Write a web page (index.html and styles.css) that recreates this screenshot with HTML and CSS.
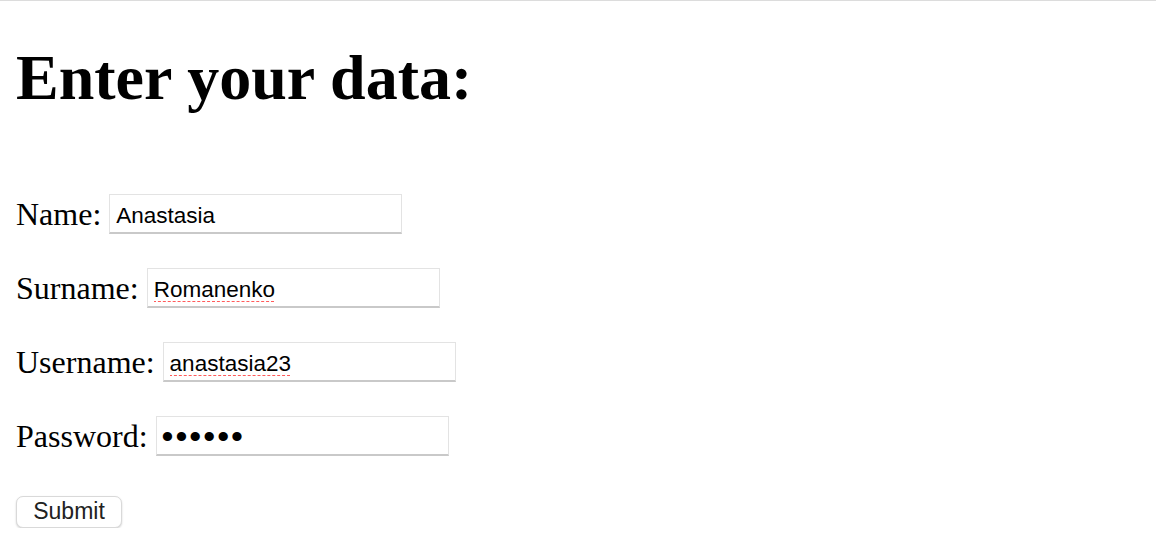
FILE: index.html
```html
<!DOCTYPE html>
<html lang="en">
<head>
<meta charset="utf-8">
<title>Enter your data</title>
<link rel="stylesheet" href="styles.css">
</head>
<body>
<div class="page">
  <h1 class="title">Enter your data:</h1>
  <form class="form">
    <div class="row">
      <label class="label" for="name">Name:</label>
      <input class="field" id="name" type="text" value="Anastasia">
    </div>
    <div class="row">
      <label class="label" for="surname">Surname:</label>
      <input class="field misspelled" id="surname" type="text" value="Romanenko">
    </div>
    <div class="row">
      <label class="label" for="username">Username:</label>
      <input class="field misspelled" id="username" type="text" value="anastasia23">
    </div>
    <div class="row">
      <label class="label" for="password">Password:</label>
      <input class="field password" id="password" type="password" value="secret">
    </div>
    <div class="actions">
      <button class="submit" type="button">Submit</button>
    </div>
  </form>
</div>
</body>
</html>
```
FILE: styles.css
```css
html, body {
  margin: 0;
  padding: 0;
  background: #ffffff;
}

body {
  border-top: 1px solid #dcdcdc;
  font-family: "Liberation Serif", "Times New Roman", serif;
  color: #000;
}

.page {
  padding: 0 16px;
}

.title {
  margin: 41px 0 0;
  font-size: 64px;
  line-height: 72px;
  font-weight: bold;
}

.form {
  margin-top: 80px;
  display: flex;
  flex-direction: column;
  gap: 34px;
}

.row {
  display: flex;
  align-items: center;
  gap: 8px;
  height: 40px;
}

.label {
  font-size: 32px;
  line-height: 36px;
}

.field {
  box-sizing: border-box;
  width: 293px;
  height: 40px;
  margin: 0;
  padding: 4px 6px 0;
  border: 1px solid #e3e3e3;
  border-bottom: 2px solid #c9c9c9;
  border-radius: 0;
  background: #fff;
  font-family: "Liberation Sans", Arial, sans-serif;
  font-size: 22.5px;
  color: #000;
  outline: none;
}

.misspelled {
  text-decoration-line: underline;
  text-decoration-style: dashed;
  text-decoration-color: #ff5a5a;
  text-decoration-thickness: 1px;
  text-underline-offset: 4px;
}

.password {
  font-size: 34px;
  letter-spacing: 2px;
  padding-left: 5px;
  padding-top: 2px;
}

.actions {
  margin-top: 6px;
  display: flex;
}

.submit {
  box-sizing: border-box;
  width: 106px;
  height: 32px;
  margin: 0;
  padding: 0 0 1px;
  border: 1px solid #d9d9d9;
  border-radius: 7px;
  background: #fff;
  box-shadow: 0 1px 2px rgba(0, 0, 0, 0.18);
  font-family: "Liberation Sans", Arial, sans-serif;
  font-size: 23px;
  color: #222;
}
```
